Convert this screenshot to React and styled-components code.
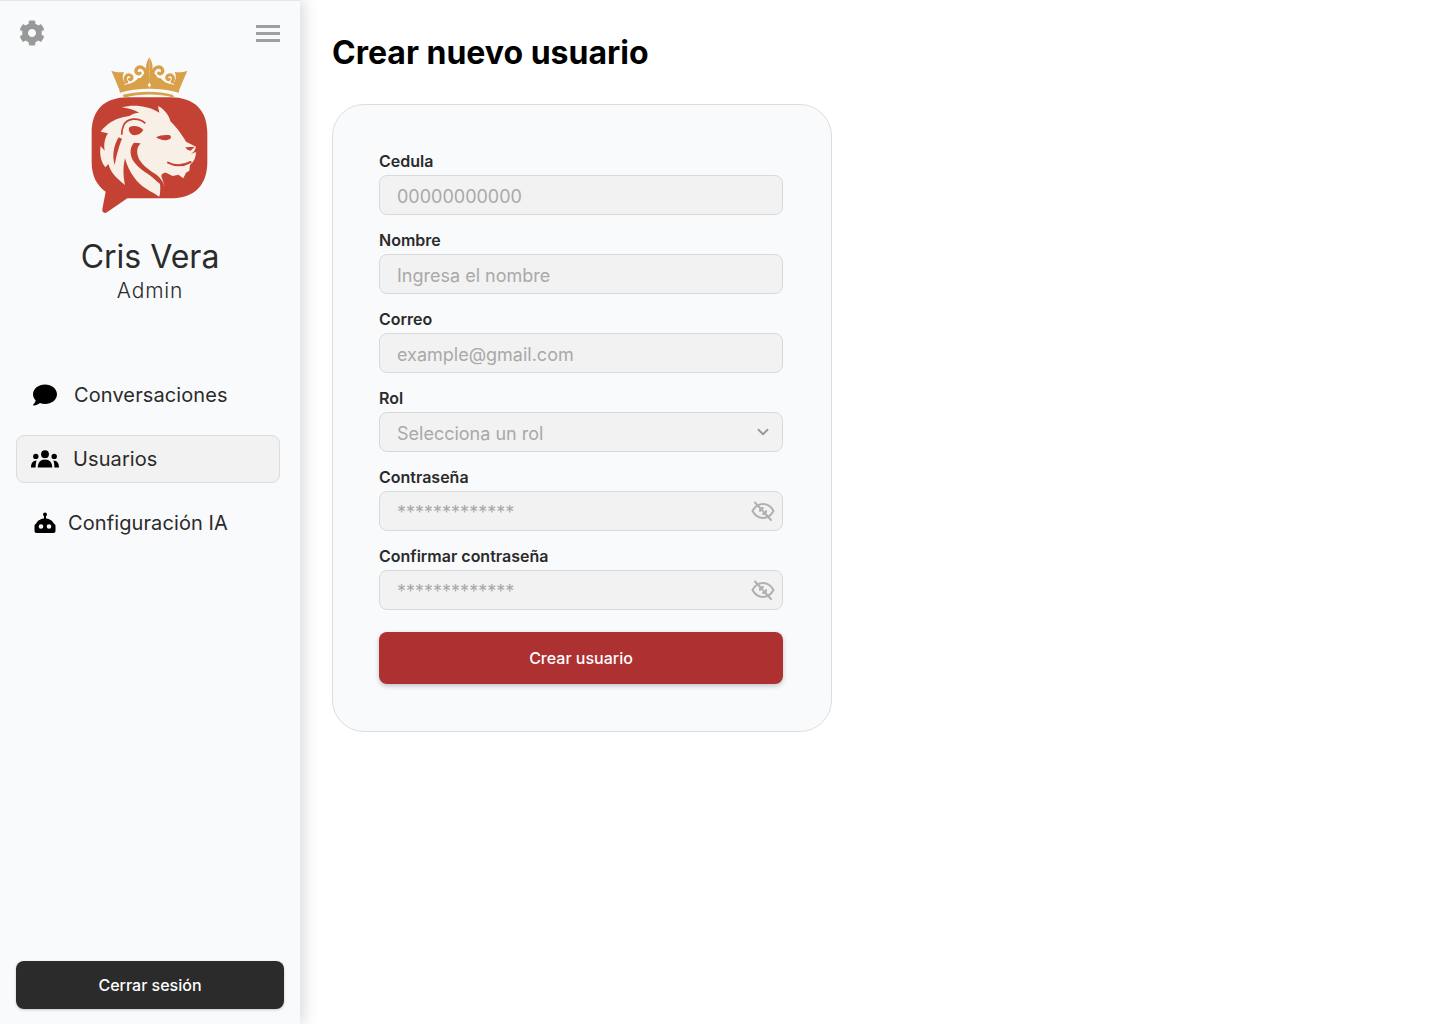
import React from 'react';
import styled, { createGlobalStyle } from 'styled-components';
import { FaCog, FaComment } from 'react-icons/fa';
import { ChevronDown } from 'lucide-react';

const GlobalStyle = createGlobalStyle`
  html, body {
    margin: 0;
    padding: 0;
    background: #ffffff;
    font-family: Inter, "Liberation Sans", sans-serif;
  }
  * {
    box-sizing: border-box;
  }
`;

const Page = styled.div`
  display: flex;
  min-height: 100vh;
`;

const Sidebar = styled.aside`
  display: flex;
  flex-direction: column;
  width: 300px;
  height: 1024px;
  flex-shrink: 0;
  padding: 19px 16px 15px 16px;
  background: #f9fafc;
  border-top: 1px solid #e6e6e6;
  box-shadow: 4px 0 14px rgba(0, 0, 0, 0.15);
`;

const TopBar = styled.div`
  display: flex;
  justify-content: space-between;
  align-items: center;
  height: 26px;
  padding: 0 4px 0 3px;
  color: #999999;
`;

const Burger = styled.div`
  display: flex;
  flex-direction: column;
  gap: 4px;
  width: 24px;
`;

const BurgerLine = styled.span`
  display: block;
  height: 3px;
  background: #a0a0a0;
`;

const LogoWrap = styled.div`
  display: flex;
  justify-content: center;
  height: 170px;
  margin: 4px 0 0 0;
`;

const UserName = styled.div`
  margin-top: 18px;
  font-size: 32px;
  line-height: 38px;
  font-weight: 400;
  text-align: center;
  color: #2b2b2b;
`;

const UserRole = styled.div`
  margin-top: 3px;
  font-size: 21px;
  line-height: 24px;
  font-weight: 300;
  letter-spacing: 0.8px;
  text-align: center;
  color: #2b2b2b;
`;

const Nav = styled.nav`
  display: flex;
  flex-direction: column;
  gap: 16px;
  width: 264px;
  margin-top: 68px;
`;

const NavItem = styled.div`
  display: flex;
  align-items: center;
  height: 48px;
  padding-left: 14px;
  font-size: 20px;
  letter-spacing: 0.1px;
  color: #2b2b2b;
  border-radius: 8px;
  border: 1px solid ${(p) => (p.$active ? '#dcdcdc' : 'transparent')};
  background: ${(p) => (p.$active ? '#f2f2f2' : 'transparent')};
`;

const NavIcon = styled.span`
  display: flex;
  justify-content: center;
  width: 28px;
  color: #000000;
`;

const NavLabel = styled.span`
  margin-left: ${(p) => p.$gap}px;
`;

const LogoutButton = styled.button`
  width: 100%;
  height: 48px;
  margin-top: auto;
  border: none;
  border-radius: 8px;
  background: #2b2b2b;
  color: #ffffff;
  font-family: inherit;
  font-size: 16px;
  font-weight: 500;
  box-shadow: 0 1px 3px rgba(0, 0, 0, 0.2);
`;

const Main = styled.main`
  flex: 1;
  padding: 33px 32px 32px;
`;

const Title = styled.h1`
  margin: 0 0 31px 0;
  font-size: 32px;
  line-height: 40px;
  font-weight: 700;
  color: #000000;
`;

const Card = styled.form`
  display: flex;
  flex-direction: column;
  gap: 15px;
  width: 500px;
  height: 628px;
  padding: 46px 48px 46px 46px;
  background: #f9fafc;
  border: 1px solid #dddddd;
  border-radius: 32px;
`;

const Field = styled.div`
  display: flex;
  flex-direction: column;
`;

const Label = styled.label`
  height: 24px;
  font-size: 16px;
  line-height: 20px;
  font-weight: 600;
  color: #2b2b2b;
`;

const InputWrap = styled.div`
  position: relative;
  height: 40px;
`;

const Input = styled.input`
  width: 100%;
  height: 40px;
  padding: ${(p) => (p.$secret ? '3px' : '2px')} 17px 0;
  border: 1px solid #d9d9d9;
  border-radius: 8px;
  background: #f2f2f2;
  font-family: inherit;
  font-size: 18px;
  color: #2b2b2b;

  &::placeholder {
    color: #a9a9a9;
    opacity: 1;
  }
`;

const Select = styled.select`
  width: 100%;
  height: 40px;
  padding: 2px 17px 0;
  border: 1px solid #d9d9d9;
  border-radius: 8px;
  background: #f2f2f2;
  font-family: inherit;
  font-size: 18px;
  color: #a9a9a9;
  appearance: none;
`;

const TrailingIcon = styled.span`
  position: absolute;
  top: 0;
  bottom: 0;
  right: 8px;
  display: flex;
  align-items: center;
  justify-content: center;
  width: 24px;
  color: ${(p) => p.$color};
  pointer-events: none;
`;

const SubmitButton = styled.button`
  height: 52px;
  margin-top: 7px;
  border: none;
  border-radius: 8px;
  background: #ad3131;
  color: #ffffff;
  font-family: inherit;
  font-size: 16px;
  font-weight: 500;
  box-shadow: 0 2px 5px rgba(0, 0, 0, 0.22);
`;

const RED = '#c44234';
const CREAM = '#f8f0e6';
const GOLD = '#d9a04a';

// mitad de la corona, se dibuja dos veces en espejo
const CrownSide = () => (
  <>
    <path fill={GOLD} d="M124 62 C136 66 150 68 162 66 C157 78 156 90 168 100 L146 114 Z" />
    <path fill={GOLD} d="M143 100 C165 108 190 102 205 84 L238 84 V116 C205 116 175 120 150 128 Z" />
    <path fill="none" stroke={GOLD} strokeWidth="9" strokeLinecap="round" d="M170 96 C160 84 170 70 182 76 C190 82 184 92 178 88" />
    <path fill="none" stroke={GOLD} strokeWidth="10" strokeLinecap="round" d="M228 70 C226 52 208 46 200 56 C194 66 202 74 210 70" />
    <path fill={GOLD} d="M238 22 C232 32 226 44 229 62 L210 86 L238 96 Z" />
  </>
);

const Logo = () => (
  <svg width="160" height="170" viewBox="0 0 480 510">
    {/* burbuja */}
    <path
      fill={RED}
      d="M175 142 H300 C375 142 412 182 412 250 V335 C412 405 375 445 300 445 H172 L112 486 C104 492 96 488 97 478 L107 425 C80 405 65 378 65 335 V250 C65 182 100 142 175 142 Z"
    />
    {/* corona */}
    <CrownSide />
    <g transform="translate(476 0) scale(-1 1)">
      <CrownSide />
    </g>
    <path fill="#f9fafc" d="M238 98 L243 105 L238 112 L233 105 Z" />
    <path fill={GOLD} d="M162 143 C210 130 265 130 314 143 L308 134 C265 122 210 122 158 134 Z" />
    {/* leon */}
    <path
      fill={CREAM}
      d="M155 172 C190 163 232 166 268 188 L264 168 C284 178 297 196 301 214 C322 234 338 258 348 275 L378 290 C376 300 370 308 362 312 L378 306 C378 322 372 335 360 345 L358 362 L348 368 L340 385 L325 374 L308 378 L288 368 C276 368 272 375 276 385 L284 408 C276 404 272 398 268 392 C272 405 272 425 268 440 C245 425 212 412 192 382 C180 366 170 345 165 325 C158 352 160 382 165 405 C140 385 122 368 115 342 L106 352 C92 335 88 310 92 288 L104 302 C100 280 106 262 114 250 L92 245 C110 222 132 208 158 202 L178 198 C190 190 198 188 208 188 C190 178 172 175 155 172 Z"
    />
    {/* oreja y mechones */}
    <path fill="none" stroke={RED} strokeWidth="5" d="M226 220 C205 200 170 204 160 228 C156 238 155 246 155 254" />
    <path fill={RED} d="M156 266 C148 285 140 312 134 345 C126 318 130 288 146 262 Z" />
    <path fill={RED} d="M178 232 C192 224 210 230 220 240 C212 254 196 258 186 254 C178 248 174 240 178 232 Z" />
    <path fill={RED} d="M192 278 C178 292 178 318 194 338 C212 362 240 372 256 390 C266 400 276 406 284 408 C278 392 268 378 250 368 C226 352 206 335 202 312 C200 298 204 288 212 280 Z" />
    <path fill={RED} d="M258 262 C270 256 285 254 300 256 C306 262 302 268 292 270 C278 272 268 268 258 262 Z" />
    <path fill={RED} d="M346 292 L374 290 L362 302 C354 302 350 298 346 292 Z" />
    <path fill="none" stroke={RED} strokeWidth="6" strokeLinecap="round" d="M294 338 C318 350 340 348 362 336" />
  </svg>
);

const EyeSlash = () => (
  <svg width="24" height="24" viewBox="0 0 24 24" fill="none" stroke="currentColor" strokeWidth="2" strokeLinecap="round">
    <path d="M1.5 12 C4.5 6.5 8.5 5 12 5 C15.5 5 19.5 6.5 22.5 12 C19.5 17.5 15.5 19 12 19 C8.5 19 4.5 17.5 1.5 12 Z" />
    <path d="M9 12 a3 3 0 0 1 3-3" />
    <path d="M15 12 a3 3 0 0 1-3 3" />
    <path d="M4 3.5 L20 21" />
  </svg>
);

const GroupIcon = () => (
  <svg width="28" height="18" viewBox="0 0 28 18" fill="currentColor">
    <circle cx="14" cy="4.2" r="3.9" />
    <path d="M6.8 17.5 C6.8 12.4 9.6 9.6 14 9.6 C18.4 9.6 21.2 12.4 21.2 17.5 Z" />
    <circle cx="4.8" cy="6.4" r="2.7" />
    <path d="M0 17.5 C0 13.4 1.6 10.6 5.6 10.4 C4.9 12.2 4.6 14.6 4.6 17.5 Z" />
    <circle cx="23.2" cy="6.4" r="2.7" />
    <path d="M28 17.5 C28 13.4 26.4 10.6 22.4 10.4 C23.1 12.2 23.4 14.6 23.4 17.5 Z" />
  </svg>
);

const RobotIcon = () => (
  <svg width="24" height="24" viewBox="0 0 24 24" fill="currentColor">
    <circle cx="12" cy="3.4" r="2" />
    <rect x="11" y="4" width="2" height="5" />
    <path
      fillRule="evenodd"
      d="M1.5 20 V15.5 C1.5 14 2.2 13 3.2 12.6 C4.5 9.5 8 7.5 12 7.5 C16 7.5 19.5 9.5 20.8 12.6 C21.8 13 22.5 14 22.5 15.5 V20 C22.5 21.2 21.7 22 20.5 22 H3.5 C2.3 22 1.5 21.2 1.5 20 Z M8 13.2 A2.3 2.3 0 1 0 8 17.8 A2.3 2.3 0 1 0 8 13.2 Z M16 13.2 A2.3 2.3 0 1 0 16 17.8 A2.3 2.3 0 1 0 16 13.2 Z"
    />
  </svg>
);

const FormField = ({ label, placeholder, secret }) => (
  <Field>
    <Label>{label}</Label>
    <InputWrap>
      <Input placeholder={placeholder} $secret={secret} />
      {secret && (
        <TrailingIcon $color="#b0b0b0">
          <EyeSlash />
        </TrailingIcon>
      )}
    </InputWrap>
  </Field>
);

const App = () => (
  <Page>
    <GlobalStyle />
    <Sidebar>
      <TopBar>
        <FaCog size={26} />
        <Burger>
          <BurgerLine />
          <BurgerLine />
          <BurgerLine />
        </Burger>
      </TopBar>
      <LogoWrap>
        <Logo />
      </LogoWrap>
      <UserName>Cris Vera</UserName>
      <UserRole>Admin</UserRole>
      <Nav>
        <NavItem>
          <NavIcon><FaComment size={24} /></NavIcon>
          <NavLabel $gap={15}>Conversaciones</NavLabel>
        </NavItem>
        <NavItem $active>
          <NavIcon><GroupIcon /></NavIcon>
          <NavLabel $gap={14}>Usuarios</NavLabel>
        </NavItem>
        <NavItem>
          <NavIcon><RobotIcon /></NavIcon>
          <NavLabel $gap={9}>Configuración IA</NavLabel>
        </NavItem>
      </Nav>
      <LogoutButton type="button">Cerrar sesión</LogoutButton>
    </Sidebar>
    <Main>
      <Title>Crear nuevo usuario</Title>
      <Card>
        <FormField label="Cedula" placeholder="00000000000" />
        <FormField label="Nombre" placeholder="Ingresa el nombre" />
        <FormField label="Correo" placeholder="example@gmail.com" />
        <Field>
          <Label>Rol</Label>
          <InputWrap>
            <Select defaultValue="">
              <option value="">Selecciona un rol</option>
            </Select>
            <TrailingIcon $color="#999999">
              <ChevronDown size={18} strokeWidth={2.5} />
            </TrailingIcon>
          </InputWrap>
        </Field>
        <FormField label="Contraseña" placeholder="*************" secret />
        <FormField label="Confirmar contraseña" placeholder="*************" secret />
        <SubmitButton type="button">Crear usuario</SubmitButton>
      </Card>
    </Main>
  </Page>
);

export default App;
